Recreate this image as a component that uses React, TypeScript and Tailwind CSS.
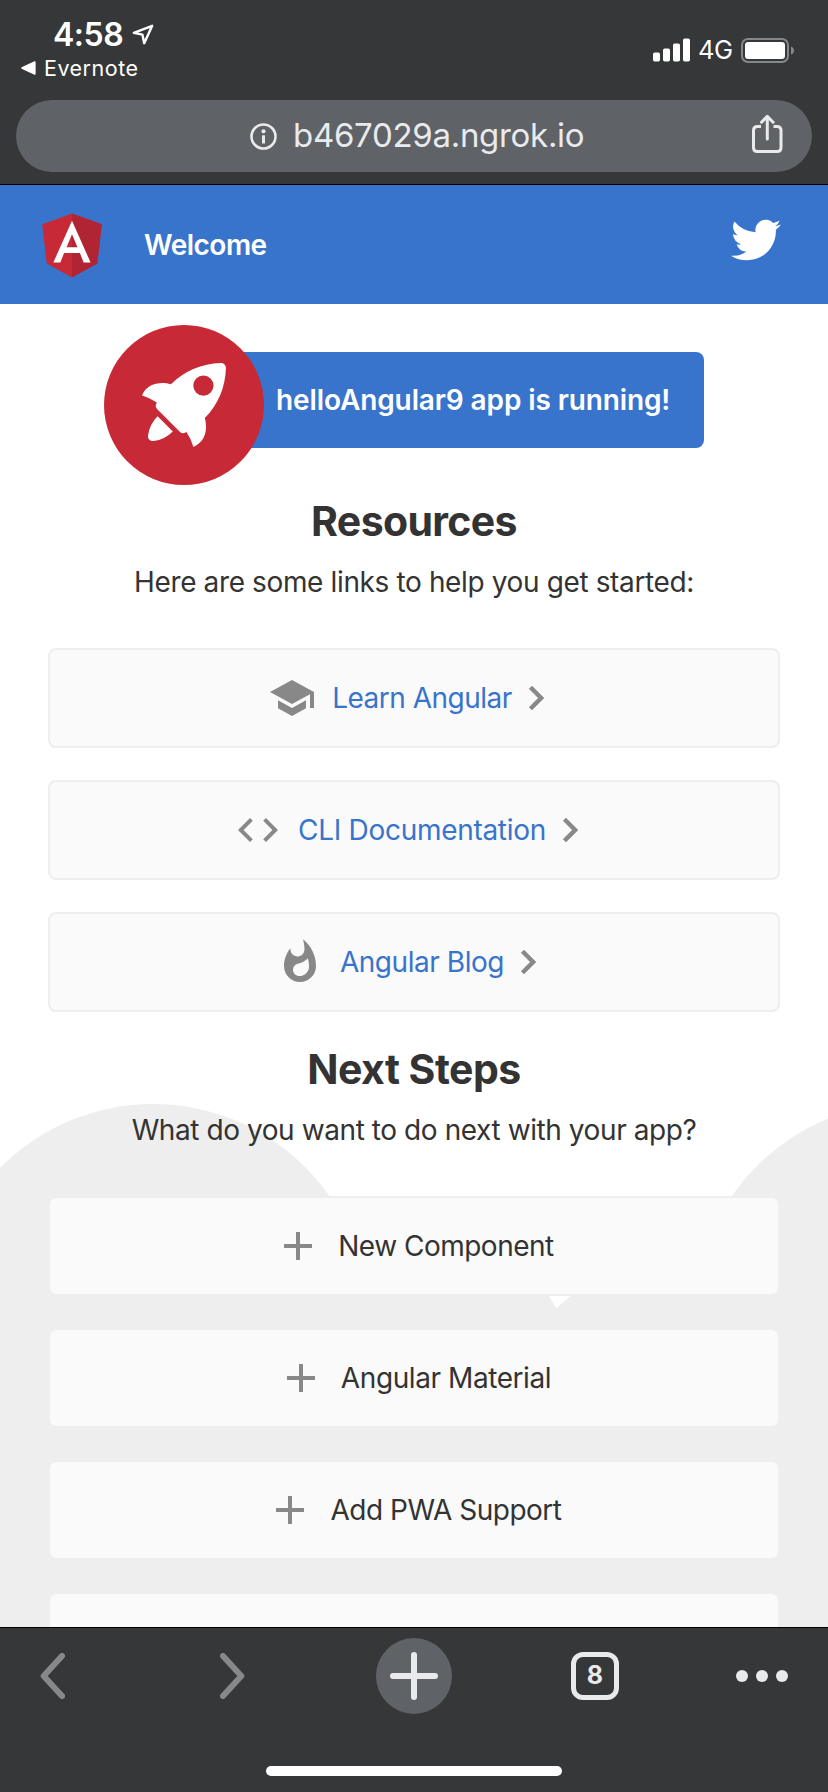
import type { ReactNode } from "react";

const icons = {
  school: "M5 13.18v4L12 21l7-3.82v-4L12 17l-7-3.82zM12 3L1 9l11 6 9-4.91V17h2V9L12 3z",
  code: "M9.4 16.6L4.8 12l4.6-4.6L8 6l-6 6 6 6 1.4-1.4zm5.2 0l4.6-4.6-4.6-4.6L16 6l6 6-6 6-1.4-1.4z",
  flame:
    "M13.5.67s.74 2.65.74 4.8c0 2.06-1.35 3.73-3.41 3.73-2.07 0-3.63-1.67-3.63-3.73l.03-.36C5.21 7.51 4 10.62 4 14c0 4.42 3.58 8 8 8s8-3.58 8-8C20 8.61 17.41 3.8 13.5.67zM11.71 19c-1.78 0-3.22-1.4-3.22-3.14 0-1.62 1.05-2.76 2.81-3.12 1.77-.36 3.6-1.21 4.62-2.58.39 1.29.59 2.65.59 4.04 0 2.65-2.15 4.8-4.8 4.8z",
  chevron: "M10 6L8.59 7.41 13.17 12l-4.58 4.59L10 18l6-6z",
  plus: "M19 13h-6v6h-2v-6H5v-2h6V5h2v6h6v2z",
};

function Icon({ d }: { d: string }) {
  return (
    <svg viewBox="0 0 24 24" className="size-12 shrink-0 fill-[#888888]">
      <path d={d} />
    </svg>
  );
}

function Chevron() {
  return (
    <svg viewBox="0 0 24 24" className="size-12 shrink-0 fill-[#888888] stroke-[#888888] stroke-[0.25]">
      <path d={icons.chevron} />
    </svg>
  );
}

function Card({ children }: { children?: ReactNode }) {
  return (
    <div className="flex h-[100px] w-full shrink-0 items-center justify-center rounded-lg border-2 border-[#eeeeee] bg-[#fafafa]">
      {children}
    </div>
  );
}

function LinkCard({ icon, label, text }: { icon: string; label: string; text: string }) {
  return (
    <Card>
      <Icon d={icon} />
      <span className={`ml-4 whitespace-nowrap text-[#3874cb] ${text}`}>{label}</span>
      <Chevron />
    </Card>
  );
}

function StepCard({ label, text }: { label: string; text: string }) {
  return (
    <Card>
      <Icon d={icons.plus} />
      <span className={`ml-4 whitespace-nowrap ${text}`}>{label}</span>
    </Card>
  );
}

function StatusBar() {
  return (
    <div className="flex h-[100px] justify-between text-white">
      <div className="flex flex-col pl-[21px] pt-[15px]">
        <div className="flex h-10 items-center pl-8">
          <span className="w-[79px] text-[32px] font-semibold leading-10 tracking-[-0.5px]">4:58</span>
          <svg viewBox="0 0 24 24" className="-mt-[1px] size-6" fill="none" stroke="white" strokeWidth="2.4" strokeLinejoin="round">
            <path d="M20.2 2.8 1.8 9.8 10.4 11.6 12.2 20.2Z" />
          </svg>
        </div>
        <div className="-mt-px flex h-7 items-center">
          <svg viewBox="0 0 15 14" className="h-3.5 w-[15px] fill-white">
            <path d="M.6 6.3 13.4.3Q14.6 0 14.6 1V13Q14.6 14 13.4 13.7L.6 7.7Q-.2 7 .6 6.3Z" />
          </svg>
          <span className="ml-2 text-[21.5px] tracking-[0.5px]">Evernote</span>
        </div>
      </div>
      <div className="flex h-[100px] items-center pr-[34px]">
        <svg viewBox="0 0 37 24" className="h-6 w-[37px] fill-white">
          <rect x="0" y="14.5" width="7" height="9" rx="1.7" />
          <rect x="10" y="10.5" width="7" height="13" rx="1.7" />
          <rect x="20" y="5.5" width="7" height="18" rx="1.7" />
          <rect x="30" y=".5" width="7" height="23" rx="1.7" />
        </svg>
        <span className="ml-2 w-[35px] text-[25.5px] tracking-[-0.5px]">4G</span>
        <svg viewBox="0 0 53 25" className="ml-2 h-[25px] w-[53px]">
          <rect x="1" y="1" width="46" height="23" rx="6" fill="none" stroke="#868788" strokeWidth="2" />
          <rect x="4" y="4" width="40" height="17" rx="3.2" fill="white" />
          <path d="M50 8.5Q53 9.5 53 12.5T50 16.5Z" fill="#868788" />
        </svg>
      </div>
    </div>
  );
}

function AddressBar() {
  return (
    <div className="mx-4 flex h-[72px] items-center rounded-full bg-[#5f6267] pl-[234px] pr-7">
      <svg viewBox="0 0 27 27" className="size-[27px]" fill="none" stroke="#e9eaed">
        <circle cx="13.5" cy="13.5" r="12" strokeWidth="2.6" />
        <circle cx="13.5" cy="8.3" r="2.1" fill="#e9eaed" stroke="none" />
        <path d="M13.5 12.3V20.5" strokeWidth="3" />
      </svg>
      <span className="ml-4 flex-1 text-[33px] text-[#e9eaed] tracking-[-0.3px]">b467029a.ngrok.io</span>
      <svg viewBox="0 0 33 40" className="mb-[5px] h-10 w-[33px]" fill="none" stroke="#e9eaed" strokeWidth="3" strokeLinecap="round" strokeLinejoin="round">
        <path d="M10 12.6H6.5Q2.5 12.6 2.5 16.6V33.6Q2.5 37.6 6.5 37.6H26Q30 37.6 30 33.6V16.6Q30 12.6 26 12.6H22.500" strokeLinecap="butt" />
        <path d="M16.300 25V2.500M10.500 8.200 16.300 2.400 22.100 8.200" />
      </svg>
    </div>
  );
}

function Toolbar() {
  return (
    <div className="flex h-[119px] items-center bg-[#3874cb] pl-8 pr-8 text-white">
      <svg viewBox="0 0 250 250" className="mb-px size-20">
        <polygon fill="#c82937" points="125,30 31.9,63.2 46.1,186.3 125,230 203.9,186.3 218.1,63.2" />
        <polygon fill="#b02434" points="125,30 125,230 203.9,186.3 218.1,63.2" />
        <path fill="#fff" d="M125,52.1L66.8,182.6h21.7l11.7-29.2h49.4l11.7,29.2h21.7L125,52.1z M142,135.4H108l17-40.9L142,135.4z" />
      </svg>
      <span className="ml-8 flex-1 text-[28px] font-semibold tracking-[-0.5px]">Welcome</span>
      <svg viewBox="0 0 400 400" className="mb-[9px] size-20 fill-white">
        <path d="M153.62,301.59c94.34,0,145.94-78.16,145.94-145.94,0-2.22,0-4.43-.15-6.63A104.36,104.36,0,0,0,325,122.47a102.38,102.38,0,0,1-29.46,8.07,51.47,51.47,0,0,0,22.55-28.37,102.79,102.79,0,0,1-32.57,12.45,51.34,51.34,0,0,0-87.41,46.78A145.62,145.62,0,0,1,92.4,107.81a51.33,51.33,0,0,0,15.88,68.47A50.91,50.91,0,0,1,85,169.86c0,.21,0,.43,0,.65a51.31,51.31,0,0,0,41.15,50.28,51.21,51.21,0,0,1-23.16.88,51.35,51.35,0,0,0,47.92,35.62,102.92,102.92,0,0,1-63.7,22A104.41,104.41,0,0,1,75,278.55a145.21,145.21,0,0,0,78.62,23" />
      </svg>
    </div>
  );
}

function Rocket() {
  return (
    <svg viewBox="0 0 101.678 101.678" className="absolute -left-5 -top-[27px] size-40">
      <circle cx="50.839" cy="50.839" r="50.839" fill="#c82937" />
      <g transform="translate(24.185 24.185)" fill="#fff">
        <path
          transform="translate(0.371 3.363)"
          d="M3.4,42.615a3.084,3.084,0,0,0,3.553,3.553,21.419,21.419,0,0,0,12.215-6.107L9.511,30.4A21.419,21.419,0,0,0,3.4,42.615Z"
        />
        <path d="M53.3,3.221A3.09,3.09,0,0,0,50.081,0,48.227,48.227,0,0,0,18.322,13.437c-6-1.666-14.991-1.221-18.322,7.218A33.892,33.892,0,0,1,9.439,25.1l-.333.666a3.013,3.013,0,0,0,.555,3.553L23.985,43.641a2.9,2.9,0,0,0,3.553.555l.666-.333A33.892,33.892,0,0,1,32.647,53.3c8.55-3.664,8.884-12.326,7.218-18.322A48.227,48.227,0,0,0,53.3,3.221ZM34.424,9.772a6.439,6.439,0,1,1,9.106,9.106,6.368,6.368,0,0,1-9.106,0A6.467,6.467,0,0,1,34.424,9.772Z" />
      </g>
    </svg>
  );
}

function Clouds() {
  return (
    <svg viewBox="0 0 828 523" className="absolute bottom-0 left-0 h-[523px] w-full">
      <g fill="#eeeeee">
        <circle cx="153" cy="215" r="215" />
        <circle cx="909" cy="214" r="215" />
        <path d="M0 190H548L556.500 204 571 191.500 828 190V523H0Z" />
      </g>
      <path d="M340 150H700V190H571.500L556.500 204 547.500 190H340Z" fill="#fff" />
    </svg>
  );
}

function BottomBar() {
  return (
    <div className="flex h-[165px] flex-col border-t border-black bg-[#363738]">
      <div className="flex h-[96px] items-center pl-10 pr-10">
        <svg viewBox="0 0 25 46" className="h-[46px] w-[25px]" fill="none" stroke="#87888a" strokeWidth="6" strokeLinecap="round" strokeLinejoin="round">
          <path d="M22 3 3.700 23 22 43" />
        </svg>
        <svg viewBox="0 0 25 46" className="ml-[155px] h-[46px] w-[25px]" fill="none" stroke="#87888a" strokeWidth="6" strokeLinecap="round" strokeLinejoin="round">
          <path d="M3 3 21.300 23 3 43" />
        </svg>
        <div className="ml-[131px] flex size-[76px] items-center justify-center rounded-full bg-[#5f6267]">
          <svg viewBox="0 0 48 48" className="size-12" stroke="#e9eaed" strokeWidth="6" strokeLinecap="round">
            <path d="M24 3V45M3 24H45" />
          </svg>
        </div>
        <div className="ml-[119px] flex size-12 items-center justify-center rounded-[12px] border-[5px] border-[#e9eaed] text-[25px] font-bold text-[#e9eaed]">
          8
        </div>
        <div className="ml-[117px] flex gap-2">
          <span className="size-3 rounded-full bg-[#e9eaed]" />
          <span className="size-3 rounded-full bg-[#e9eaed]" />
          <span className="size-3 rounded-full bg-[#e9eaed]" />
        </div>
      </div>
      <div className="mx-auto mt-[42px] h-2.5 w-[296px] rounded-full bg-white" />
    </div>
  );
}

export default function App() {
  return (
    <div className="flex h-[1792px] w-[828px] flex-col overflow-hidden bg-white font-[Inter,sans-serif] text-[#333333]">
      <header className="h-[185px] shrink-0 border-b border-black bg-[#363738]">
        <StatusBar />
        <AddressBar />
      </header>
      <Toolbar />
      <main className="relative flex h-[1323px] flex-col overflow-hidden">
        <Clouds />
        <div className="relative flex flex-col items-center px-12 pt-12 text-[28px]">
          <div className="relative flex h-24 w-[580px] items-center rounded-lg bg-[#3874cb] pl-[152px] font-semibold text-white">
            <Rocket />
            <span className="whitespace-nowrap tracking-[-0.11px]">helloAngular9 app is running!</span>
          </div>
          <h2 className="mt-12 text-[41px] font-bold leading-[50px] tracking-[-0.65px]">Resources</h2>
          <p className="mt-[18px] whitespace-nowrap leading-9 tracking-[-0.37px]">Here are some links to help you get started:</p>
          <div className="mt-12 flex w-full flex-col gap-8">
            <LinkCard icon={icons.school} label="Learn Angular" text="tracking-[-0.5px]" />
            <LinkCard icon={icons.code} label="CLI Documentation" text="tracking-[-0.3px]" />
            <LinkCard icon={icons.flame} label="Angular Blog" text="tracking-[-0.45px]" />
          </div>
          <h2 className="mt-8 text-[41px] font-bold leading-[50px] tracking-[-0.5px]">Next Steps</h2>
          <p className="mt-[18px] whitespace-nowrap leading-9 tracking-[-0.42px]">What do you want to do next with your app?</p>
          <div className="mt-12 flex w-full flex-col gap-8">
            <StepCard label="New Component" text="tracking-[-0.5px]" />
            <StepCard label="Angular Material" text="tracking-[-0.42px]" />
            <StepCard label="Add PWA Support" text="tracking-[-0.48px]" />
            <Card />
          </div>
        </div>
      </main>
      <BottomBar />
    </div>
  );
}
